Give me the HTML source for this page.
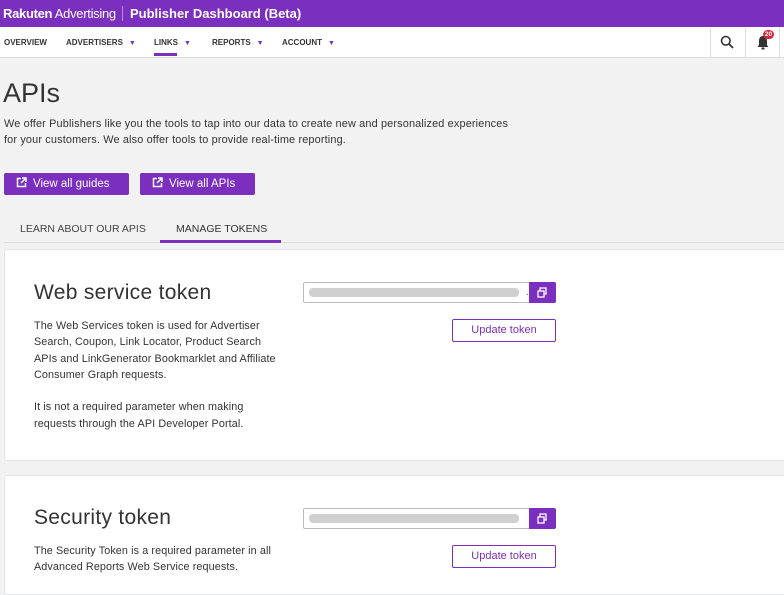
<!DOCTYPE html>
<html><head><style>
*{box-sizing:border-box;margin:0;padding:0}
body{width:784px;height:574px;overflow:hidden;background:#f2f2f2;font-family:"Liberation Sans",sans-serif;color:#333;position:relative}
.a{position:absolute;white-space:nowrap}
.hdr{position:absolute;left:0;top:0;width:784px;height:27px;background:#7b2fbe;color:#fff}
.nav{position:absolute;left:0;top:27px;width:784px;height:31px;background:#fff;border-bottom:1px solid #dcdcdc}
.nav .a{font-size:8px;font-weight:bold;color:#333;top:11px}
.tri{font-size:7px;color:#7b2fbe;margin-left:6px}
.btn{position:absolute;height:22px;background:#7b2fbe;color:#fff;font-size:11.5px;border-radius:2px;line-height:22px;padding-left:12px}
.card{position:absolute;left:4px;width:790px;background:#fff;border:1px solid #e4e6ea;border-radius:3px}
.inp{position:absolute;left:303px;width:253px;height:21px;border:1px solid #bbb;border-radius:2px;background:#fff}
.blur{position:absolute;left:5px;top:5px;width:210px;height:9px;background:#d0d0d0;border-radius:4px}
.cp{position:absolute;right:-1px;top:-1px;width:27px;height:21px;background:#7b2fbe;border-radius:0 2px 2px 0}
.ub{position:absolute;left:452px;width:104px;height:23px;border:1px solid #7b2fbe;border-radius:2px;color:#7b2fbe;font-size:11px;text-align:center;line-height:21px}
.t{font-size:21px;color:#333;font-weight:normal;letter-spacing:0.3px}
.p{font-size:10.8px;line-height:16.3px;color:#333;white-space:normal;width:252px;letter-spacing:0.1px}
</style></head><body>
<div class="hdr">
<span class="a" style="left:3px;top:6px;font-size:13px;letter-spacing:-0.3px"><b style="font-weight:600">Rakuten</b> Advertising</span>
<div class="a" style="left:122px;top:6px;width:1px;height:15px;background:#b28ad8"></div>
<span class="a" style="left:130px;top:6px;font-size:13px;font-weight:bold">Publisher Dashboard (Beta)</span>
</div>
<div class="nav">
<span class="a" style="left:4px">OVERVIEW</span>
<span class="a" style="left:66px">ADVERTISERS<span class="tri">▼</span></span>
<span class="a" style="left:154px">LINKS<span class="tri">▼</span></span>
<div class="a" style="left:154px;top:26px;width:23px;height:3px;background:#7b2fbe"></div>
<span class="a" style="left:212px">REPORTS<span class="tri">▼</span></span>
<span class="a" style="left:282px">ACCOUNT<span class="tri">▼</span></span>
<div class="a" style="left:710px;top:0;width:1px;height:30px;background:#ddd"></div>
<div class="a" style="left:745px;top:0;width:1px;height:30px;background:#ddd"></div>
<div class="a" style="left:779px;top:0;width:1px;height:30px;background:#ddd"></div>
<svg class="a" style="left:720px;top:8px" width="14" height="14" viewBox="0 0 14 14"><circle cx="5.8" cy="5.8" r="4.3" fill="none" stroke="#333" stroke-width="1.6"/><path d="M9 9l4 4" stroke="#333" stroke-width="1.8"/></svg>
<svg class="a" style="left:756px;top:7px" width="14" height="16" viewBox="0 0 14 16"><path d="M7 2c-3 0-4 2.5-4 5v4l-1.5 2h11L11 11V7c0-2.5-1-5-4-5z" fill="#333"/><rect x="5.5" y="13.5" width="3" height="2" fill="#333"/></svg>
<div class="a" style="left:763px;top:3px;width:11px;height:9px;border-radius:5px;background:#d6283d;color:#fff;font-size:6.5px;font-weight:bold;text-align:center;line-height:9px">20</div>
</div>
<span class="a" style="left:3px;top:78px;font-size:27px;color:#333">APIs</span>
<div class="a p" style="left:4px;top:116px;width:520px;font-size:10.9px;letter-spacing:0.15px">We offer Publishers like you the tools to tap into our data to create new and personalized experiences for your customers. We also offer tools to provide real-time reporting.</div>
<div class="btn" style="left:4px;top:173px;width:125px"><svg width="11" height="11" style="vertical-align:-1px;margin-right:6px"><path d="M5 1.5H1.5v8h8V6" fill="none" stroke="#fff" stroke-width="1.5"/><path d="M6 1h4v4M10 1L5 6" fill="none" stroke="#fff" stroke-width="1.5"/></svg>View all guides</div>
<div class="btn" style="left:140px;top:173px;width:115px"><svg width="11" height="11" style="vertical-align:-1px;margin-right:6px"><path d="M5 1.5H1.5v8h8V6" fill="none" stroke="#fff" stroke-width="1.5"/><path d="M6 1h4v4M10 1L5 6" fill="none" stroke="#fff" stroke-width="1.5"/></svg>View all APIs</div>
<span class="a" style="left:20px;top:223px;font-size:10.5px;color:#444">LEARN ABOUT OUR APIS</span>
<span class="a" style="left:176px;top:223px;font-size:10.5px;color:#333">MANAGE TOKENS</span>
<div class="a" style="left:4px;top:242px;width:780px;height:1px;background:#ddd"></div>
<div class="a" style="left:160px;top:240px;width:121px;height:3px;background:#7b2fbe"></div>
<div class="card" style="top:249px;height:212px">
<div class="a t" style="left:29px;top:31px">Web service token</div>
<div class="a p" style="left:29px;top:68px">The Web Services token is used for Advertiser Search, Coupon, Link Locator, Product Search APIs and LinkGenerator Bookmarklet and Affiliate Consumer Graph requests.<br><br>It is not a required parameter when making requests through the API Developer Portal.</div>
</div>
<div class="inp" style="top:282px"><div class="blur"></div><span class="a" style="left:222px;top:4px;font-size:9px">.</span><div class="cp"><svg width="27" height="21"><rect x="11" y="6" width="6" height="6" fill="none" stroke="#fff" stroke-width="1.3"/><rect x="9" y="9" width="6" height="6" fill="#7b2fbe" stroke="#fff" stroke-width="1.3"/></svg></div></div>
<div class="ub" style="top:319px">Update token</div>
<div class="card" style="top:475px;height:120px">
<div class="a t" style="left:29px;top:30px">Security token</div>
<div class="a p" style="left:29px;top:67px;width:270px">The Security Token is a required parameter in all Advanced Reports Web Service requests.</div>
</div>
<div class="inp" style="top:508px"><div class="blur"></div><div class="cp"><svg width="27" height="21"><rect x="11" y="6" width="6" height="6" fill="none" stroke="#fff" stroke-width="1.3"/><rect x="9" y="9" width="6" height="6" fill="#7b2fbe" stroke="#fff" stroke-width="1.3"/></svg></div></div>
<div class="ub" style="top:545px">Update token</div>
</body></html>
